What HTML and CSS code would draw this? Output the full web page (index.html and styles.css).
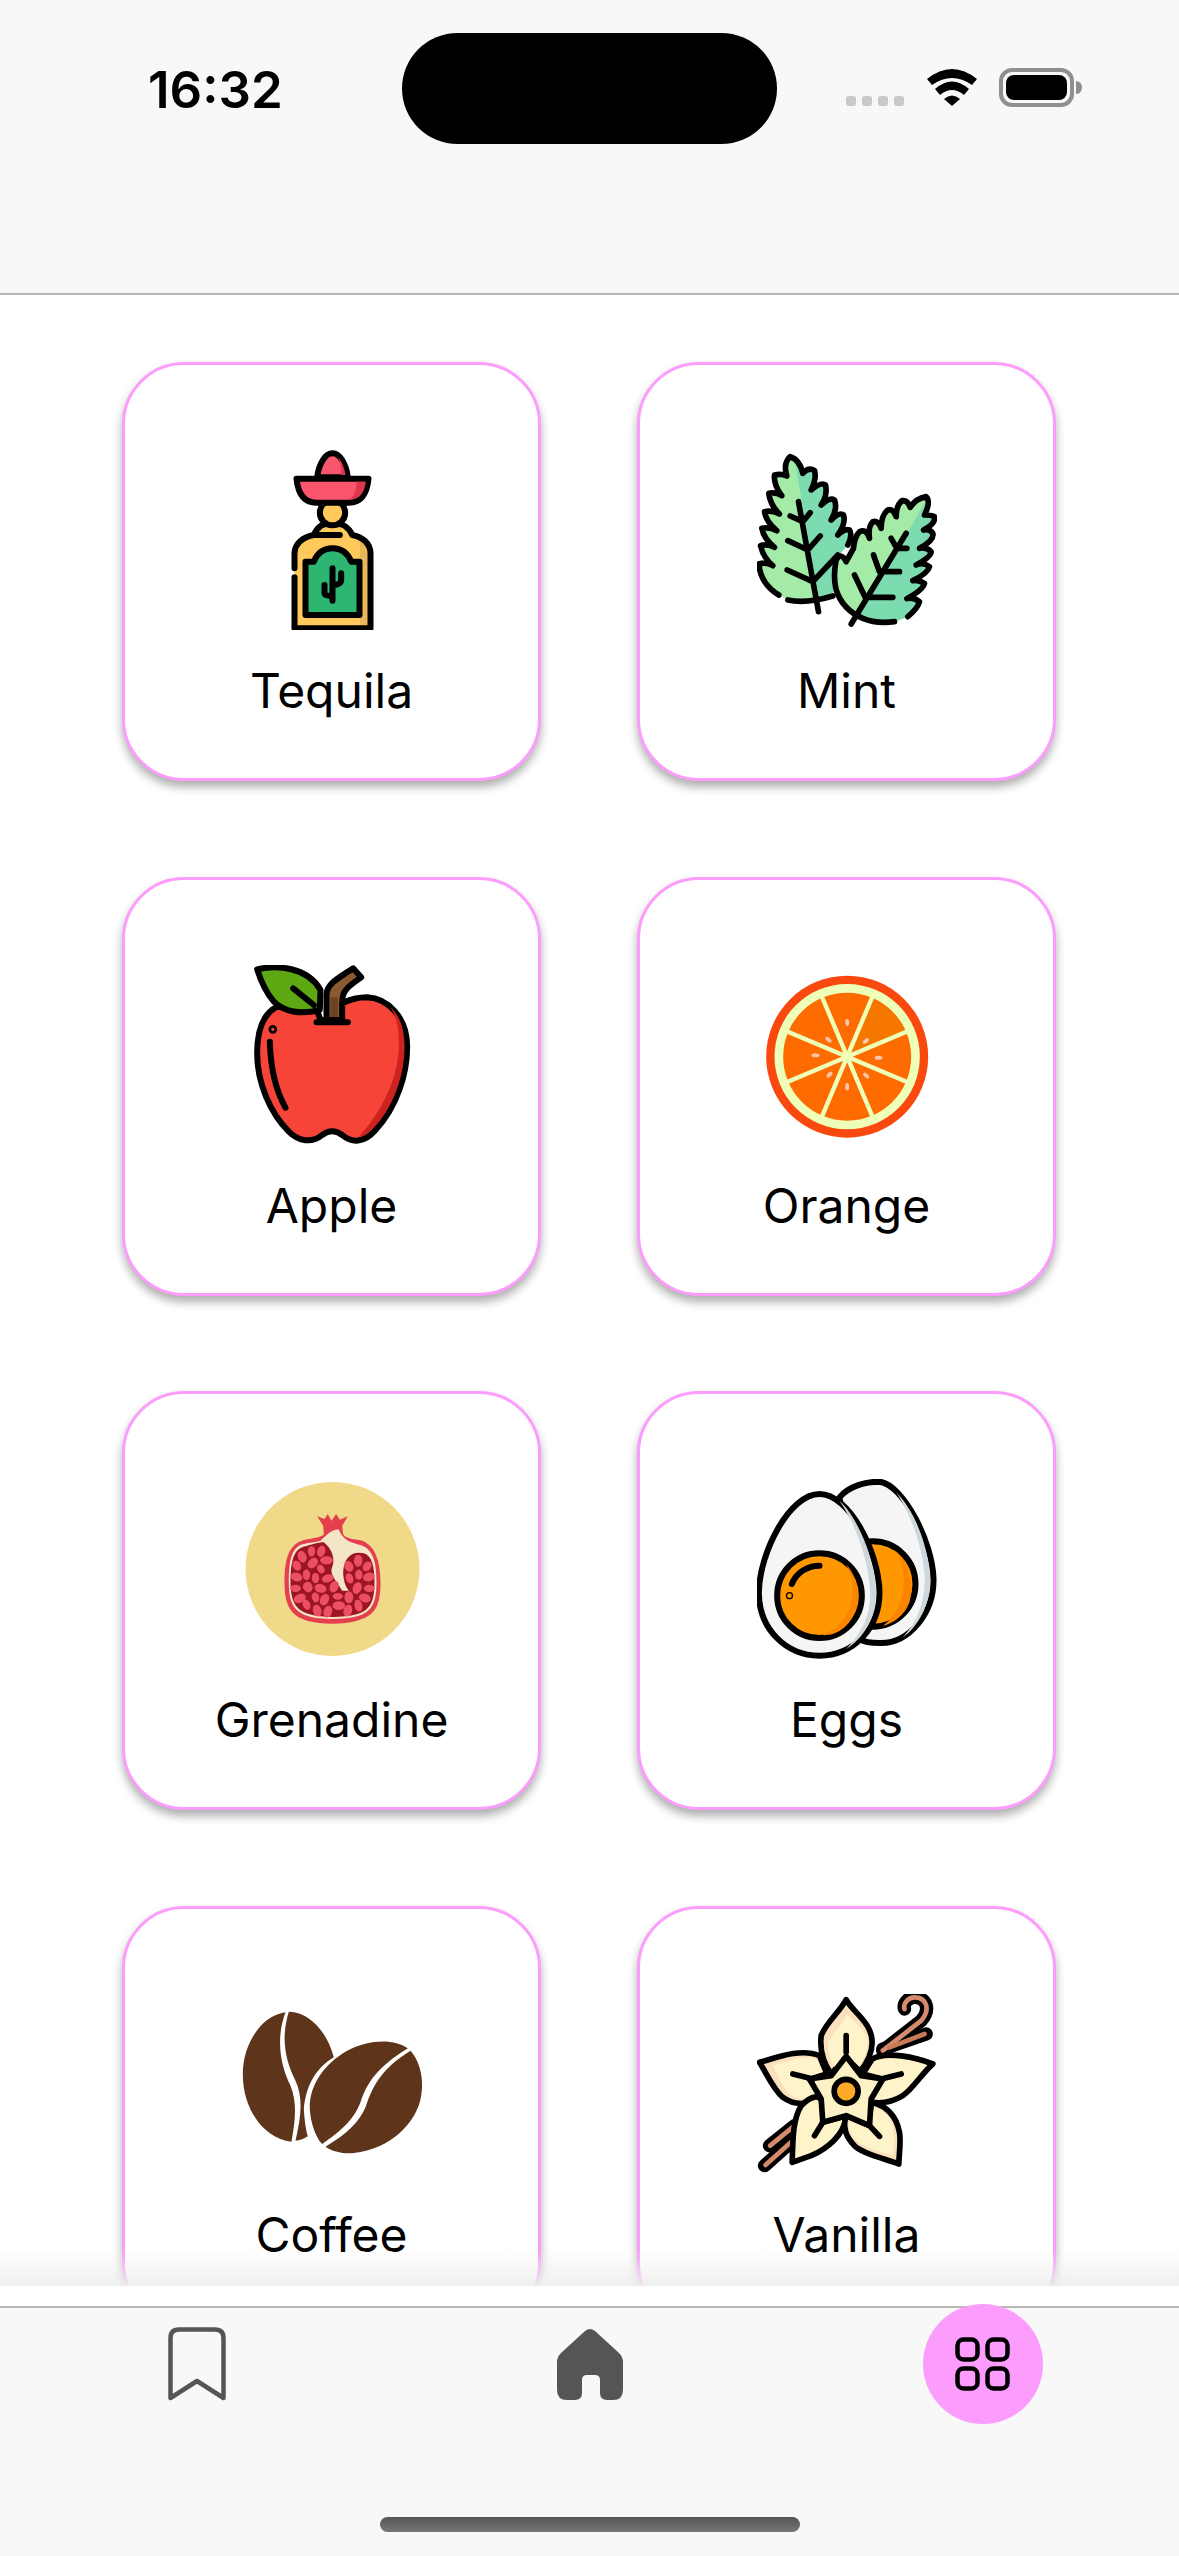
FILE: index.html
```html
<!DOCTYPE html>
<html lang="en">
<head>
<meta charset="utf-8">
<title>Ingredients</title>
<link rel="stylesheet" href="styles.css">
</head>
<body>
<div class="app">
  <header class="header">
    <div class="time">16:32</div>
    <div class="island"></div>
    <div class="status">
      <div class="signal"><span></span><span></span><span></span><span></span></div>
      <svg class="wifi" viewBox="0 0 50 37" width="50" height="37"><path d="M0 10Q25-10 50 10L45 16Q25 2 5 16Z"/><path d="M8 20Q25 5 42 20L37 26Q25 16 13 26Z"/><path d="M17 30Q25 23 33 30L25 37Z"/></svg>
      <div class="battery"><div class="battery-fill"></div></div>
      <div class="battery-tip"></div>
    </div>
  </header>

  <main class="main">
    <div class="grid">
      <article class="card">
        <svg class="icon" viewBox="424.5 330 540 540">
          <g class="ink" fill="none">
            <path d="M582 865V640C582 610 610 590 640 585C650 560 670 548 696 548C722 548 745 560 755 585C785 590 810 610 810 640V865Z" fill="#ffc95c" stroke="none"/>
            <path d="M778 600C800 610 810 625 810 640V865H778Z" fill="#e9b75a" stroke="none"/>
            <path d="M582 685V640C582 610 610 590 640 585C650 560 670 548 696 548C722 548 745 560 755 585C785 590 810 610 810 640V865H582V712"/>
            <path d="M640 585H718"/>
            <circle cx="696" cy="518" r="38" fill="#ffc95c"/>
            <path d="M650 412C655 370 675 340 696 340C717 340 737 370 742 412Z" fill="#f9566e"/>
            <path d="M712 350C725 365 732 385 735 405H722C722 385 720 365 712 350Z" fill="#e0354f" stroke="none"/>
            <path d="M588 416H804C800 455 785 488 745 488H647C607 488 592 455 588 416Z" fill="#f9566e"/>
            <path d="M768 425H796C792 455 780 478 745 480C762 468 768 450 768 425Z" fill="#e0354f" stroke="none"/>
            <path d="M777 775V665H752C742 640 722 625 696 625C670 625 650 640 640 665H615V825H777V800Z" fill="#2db672"/>
            <path d="M696 685V782M672 735V760C672 766 680 768 695 768M722 700V720C722 730 710 735 696 735"/>
          </g>
        </svg>
        <div class="label">Tequila</div>
      </article>

      <article class="card">
        <svg class="icon" viewBox="172.5 90 540 540">
          <defs>
            <clipPath id="mint-left"><polygon points="280,90 365,570 500,570 500,90"/></clipPath>
            <clipPath id="mint-right"><polygon points="690,225 458,620 730,620 730,225"/></clipPath>
          </defs>
          <g class="ink thin" fill="none">
            <path d="M238 525C205 505 182 475 178 432Q200 425 220 437Q192 415 183 377Q205 370 225 382Q192 355 187 325Q210 320 232 332Q200 305 195 275Q218 270 240 282Q212 255 208 220Q228 215 247 227Q222 195 225 165Q245 160 262 168Q250 130 272 110Q300 118 310 160Q328 140 345 152Q352 175 335 210Q365 185 378 195Q385 225 365 255Q390 230 405 240Q415 265 395 300Q420 275 432 285Q440 310 415 345Q435 325 450 330Q460 345 445 375L405 420L400 525Q340 550 265 540" fill="#a5eba8" stroke="none"/>
            <path d="M238 525C205 505 182 475 178 432Q200 425 220 437Q192 415 183 377Q205 370 225 382Q192 355 187 325Q210 320 232 332Q200 305 195 275Q218 270 240 282Q212 255 208 220Q228 215 247 227Q222 195 225 165Q245 160 262 168Q250 130 272 110Q300 118 310 160Q328 140 345 152Q352 175 335 210Q365 185 378 195Q385 225 365 255Q390 230 405 240Q415 265 395 300Q420 275 432 285Q440 310 415 345Q435 325 450 330Q460 345 445 375L405 420L400 525Q340 550 265 540" fill="#7ddbb0" stroke="none" clip-path="url(#mint-left)"/>
            <path d="M238 525C205 505 182 475 178 432Q200 425 220 437Q192 415 183 377Q205 370 225 382Q192 355 187 325Q210 320 232 332Q200 305 195 275Q218 270 240 282Q212 255 208 220Q228 215 247 227Q222 195 225 165Q245 160 262 168Q250 130 272 110Q300 118 310 160Q328 140 345 152Q352 175 335 210Q365 185 378 195Q385 225 365 255Q390 230 405 240Q415 265 395 300Q420 275 432 285Q440 310 415 345Q435 325 450 330Q460 345 445 375M265 540Q320 552 400 528"/>
            <path d="M297 245L357 575M272 288L310 305L332 278M265 362L325 390L362 348M263 450L340 485L415 405"/>
            <path d="M625 590Q655 565 660 545Q640 530 622 536Q670 510 675 490Q655 478 640 482Q685 460 690 440Q670 425 650 435Q695 410 695 395Q680 380 660 385Q705 360 700 340Q690 325 672 330Q710 310 705 290Q695 285 675 285Q695 245 680 230Q650 235 632 262Q625 240 608 242Q590 255 590 290Q580 265 565 270Q545 285 545 325Q535 300 520 305Q505 320 510 355Q500 325 480 335Q465 350 462 385L440 425Q425 395 410 420Q400 470 410 510Q430 570 490 595Q530 612 585 605Z" fill="#a5eba8" stroke="none"/>
            <path d="M625 590Q655 565 660 545Q640 530 622 536Q670 510 675 490Q655 478 640 482Q685 460 690 440Q670 425 650 435Q695 410 695 395Q680 380 660 385Q705 360 700 340Q690 325 672 330Q710 310 705 290Q695 285 675 285Q695 245 680 230Q650 235 632 262Q625 240 608 242Q590 255 590 290Q580 265 565 270Q545 285 545 325Q535 300 520 305Q505 320 510 355Q500 325 480 335Q465 350 462 385L440 425Q425 395 410 420Q400 470 410 510Q430 570 490 595Q530 612 585 605Z" fill="#7ddbb0" stroke="none" clip-path="url(#mint-right)"/>
            <path d="M625 590Q655 565 660 545Q640 530 622 536Q670 510 675 490Q655 478 640 482Q685 460 690 440Q670 425 650 435Q695 410 695 395Q680 380 660 385Q705 360 700 340Q690 325 672 330Q710 310 705 290Q695 285 675 285Q695 245 680 230Q650 235 632 262Q625 240 608 242Q590 255 590 290Q580 265 565 270Q545 285 545 325Q535 300 520 305Q505 320 510 355Q500 325 480 335Q465 350 462 385L440 425Q425 395 410 420Q400 470 410 510Q430 570 490 595Q530 612 585 605"/>
            <path d="M455 612L620 340M575 355L592 385H622M522 405L540 455H600M465 465L497 532H580"/>
          </g>
        </svg>
        <div class="label">Mint</div>
      </article>

      <article class="card">
        <svg class="icon" viewBox="64.5 75 540 540">
          <g class="ink" fill="none">
            <path d="M318 245V165C318 135 345 118 398 85L422 112C390 135 366 150 366 178V245Z" fill="#8b5a30"/>
            <path d="M330 172H352V238H330Z" fill="#6b4226" stroke="none"/>
            <path d="M170 200C130 220 110 270 110 340C110 430 150 520 205 575C235 605 275 610 305 585C325 570 345 570 365 585C395 610 430 610 465 570C530 500 560 400 560 320C560 230 500 175 440 172C410 172 385 180 365 190V240H300L290 212Z" fill="#f64438"/>
            <path d="M510 200C540 230 552 270 552 320C552 400 522 500 458 565C440 585 425 590 415 590C480 520 532 420 535 320C537 270 528 230 510 200Z" fill="#cd2320" stroke="none"/>
            <path d="M288 247H382"/>
            <path d="M110 88C170 75 260 80 300 150L298 210C240 225 190 215 160 185C135 155 120 120 110 88Z" fill="#5ea814"/>
            <path d="M218 145L280 195"/>
            <path d="M148 305C150 380 165 450 195 503"/>
            <circle cx="157" cy="268" r="4"/>
          </g>
        </svg>
        <div class="label">Apple</div>
      </article>

      <article class="card">
        <svg class="icon" viewBox="52.5 45 540 540">
          <circle cx="323" cy="320" r="243" fill="#f9490f"/>
          <circle cx="323" cy="320" r="218" fill="#eeffb8"/>
          <circle cx="323" cy="320" r="192" fill="#fe6b00"/>
          <path d="M323 320L400 150A192 192 0 0 1 500 245Z" fill="#f57700"/>
          <g class="rays">
            <path d="M323 320L245 135M323 320L401 135M323 320L138 242M323 320L508 242M323 320L138 398M323 320L508 398M323 320L245 505M323 320L401 505"/>
          </g>
          <circle cx="323" cy="320" r="16" fill="#eeffb8"/>
          <g fill="#fbc6a8">
            <ellipse cx="323" cy="217" rx="6" ry="11"/>
            <ellipse cx="267" cy="269" rx="6" ry="11" transform="rotate(-50 267 269)"/>
            <ellipse cx="379" cy="273" rx="6" ry="11" transform="rotate(50 379 273)"/>
            <ellipse cx="228" cy="316" rx="12" ry="6"/>
            <ellipse cx="417" cy="323" rx="12" ry="6"/>
            <ellipse cx="270" cy="374" rx="6" ry="11" transform="rotate(45 270 374)"/>
            <ellipse cx="380" cy="377" rx="6" ry="11" transform="rotate(-45 380 377)"/>
            <ellipse cx="323" cy="410" rx="6" ry="11"/>
          </g>
        </svg>
        <div class="label">Orange</div>
      </article>

      <article class="card">
        <svg class="icon" viewBox="64.5 60 540 540">
          <circle cx="336" cy="330" r="261" fill="#f0da89"/>
          <path d="M290 172L312 180L322 165L333 185L347 165L358 182L382 172L365 200L368 225C375 240 400 240 425 245C465 260 480 310 480 370C480 440 465 470 410 485C370 497 300 497 260 485C205 470 192 430 192 370C192 300 205 255 250 243C280 237 305 235 310 225L308 200Z" fill="#e53f4e"/>
          <path d="M250 255C215 262 205 300 205 370C205 430 220 460 265 472C300 483 370 483 410 472C455 460 468 430 468 370C468 315 460 270 420 258C395 250 370 248 355 212C340 208 320 225 300 245C285 250 265 250 250 255Z" fill="#f3e5c6"/>
          <path d="M255 262C222 268 210 300 210 370C210 425 225 455 268 466C305 477 368 477 408 466C450 455 462 425 462 370C462 325 455 290 430 283C400 275 370 290 368 340C368 360 375 385 385 395L365 395C350 370 325 345 335 325C345 300 335 270 310 250C290 250 270 258 255 262Z" fill="#9c1524"/>
          <g fill="#ec4f63">
            <ellipse cx="245" cy="293" rx="13" ry="18" transform="rotate(-20 245 293)"/>
            <ellipse cx="273" cy="277" rx="11" ry="16"/>
            <ellipse cx="302" cy="277" rx="12" ry="17" transform="rotate(15 302 277)"/>
            <ellipse cx="318" cy="304" rx="19" ry="12"/>
            <ellipse cx="277" cy="312" rx="13" ry="18" transform="rotate(45 277 312)"/>
            <ellipse cx="229" cy="320" rx="12" ry="16" transform="rotate(-30 229 320)"/>
            <ellipse cx="301" cy="330" rx="10" ry="14" transform="rotate(-30 301 330)"/>
            <ellipse cx="258" cy="347" rx="11" ry="16"/>
            <ellipse cx="285" cy="357" rx="11" ry="16"/>
            <ellipse cx="228" cy="354" rx="18" ry="13" transform="rotate(15 228 354)"/>
            <ellipse cx="322" cy="358" rx="18" ry="12" transform="rotate(-15 322 358)"/>
            <ellipse cx="341" cy="383" rx="13" ry="18" transform="rotate(25 341 383)"/>
            <ellipse cx="262" cy="384" rx="14" ry="16" transform="rotate(-30 262 384)"/>
            <ellipse cx="225" cy="388" rx="16" ry="11"/>
            <ellipse cx="300" cy="388" rx="18" ry="13" transform="rotate(15 300 388)"/>
            <ellipse cx="238" cy="418" rx="19" ry="13" transform="rotate(-25 238 418)"/>
            <ellipse cx="285" cy="415" rx="11" ry="15" transform="rotate(-15 285 415)"/>
            <ellipse cx="312" cy="422" rx="13" ry="18" transform="rotate(25 312 422)"/>
            <ellipse cx="258" cy="437" rx="11" ry="16" transform="rotate(-25 258 437)"/>
            <ellipse cx="290" cy="455" rx="13" ry="18" transform="rotate(-15 290 455)"/>
            <ellipse cx="322" cy="458" rx="13" ry="18" transform="rotate(15 322 458)"/>
            <ellipse cx="352" cy="412" rx="15" ry="10"/>
            <ellipse cx="385" cy="415" rx="13" ry="18"/>
            <ellipse cx="355" cy="440" rx="19" ry="13"/>
            <ellipse cx="382" cy="455" rx="13" ry="18" transform="rotate(15 382 455)"/>
            <ellipse cx="414" cy="440" rx="12" ry="18" transform="rotate(-15 414 440)"/>
            <ellipse cx="433" cy="417" rx="18" ry="13" transform="rotate(20 433 417)"/>
            <ellipse cx="410" cy="387" rx="13" ry="18" transform="rotate(25 410 387)"/>
            <ellipse cx="446" cy="388" rx="16" ry="11"/>
            <ellipse cx="445" cy="354" rx="18" ry="13" transform="rotate(-15 445 354)"/>
            <ellipse cx="415" cy="347" rx="11" ry="15"/>
            <ellipse cx="387" cy="358" rx="11" ry="16" transform="rotate(-20 387 358)"/>
            <ellipse cx="385" cy="322" rx="13" ry="17" transform="rotate(-25 385 322)"/>
            <ellipse cx="413" cy="305" rx="13" ry="18"/>
            <ellipse cx="440" cy="322" rx="12" ry="16" transform="rotate(35 440 322)"/>
          </g>
        </svg>
        <div class="label">Grenadine</div>
      </article>

      <article class="card">
        <svg class="icon" viewBox="52.5 30 540 540">
          <g class="ink" fill="none">
            <path d="M300 85C330 50 380 38 420 38C490 45 580 220 582 330C584 430 510 525 420 522C395 522 375 520 360 510Z" fill="#f5f5f5"/>
            <path d="M470 70C530 130 568 240 572 330C574 400 540 470 490 505C530 460 560 400 555 320C550 230 510 130 470 70Z" fill="#ced8dc" stroke="none"/>
            <circle cx="400" cy="345" r="128" fill="#ff9800"/>
            <path d="M470 245C510 290 525 345 510 400C495 440 460 465 430 470C490 430 515 320 470 245Z" fill="#fb8500" stroke="none"/>
            <path d="M240 75C150 75 60 250 58 370C58 480 140 560 240 560C340 560 420 480 420 370C418 250 330 75 240 75Z" fill="#f5f5f5"/>
            <path d="M300 95C350 140 405 260 410 370C410 450 370 510 320 540C370 490 395 430 392 370C388 270 345 160 300 95Z" fill="#ced8dc" stroke="none"/>
            <circle cx="240" cy="380" r="127" fill="#ff9800"/>
            <path d="M320 285C365 340 370 420 320 470C295 495 265 500 245 498C320 480 370 380 320 285Z" fill="#fb8500" stroke="none"/>
            <path d="M157 345C170 310 205 290 240 290"/>
            <circle cx="150" cy="380" r="2"/>
          </g>
        </svg>
        <div class="label">Eggs</div>
      </article>

      <article class="card">
        <svg class="icon" viewBox="34.5 45 540 540">
          <g fill="#5e351b">
            <path d="M165 100C90 110 35 200 37 290C38 390 100 480 183 488C195 420 200 370 180 320C150 260 135 180 165 100Z"/>
            <path d="M175 98C240 100 290 160 310 235C250 270 225 330 220 390C222 420 225 450 232 472C220 480 205 485 195 485C210 420 220 360 195 305C165 245 150 180 175 98Z"/>
            <path d="M532 208C490 180 420 180 350 215C280 255 235 320 238 390C240 430 255 475 275 495C340 450 370 420 390 370C410 310 440 265 532 208Z"/>
            <path d="M540 215C570 250 580 300 572 350C560 430 480 510 370 522C340 525 305 518 285 503C350 465 385 430 405 385C425 325 450 270 540 215Z"/>
          </g>
        </svg>
        <div class="label">Coffee</div>
      </article>

      <article class="card">
        <svg class="icon" viewBox="52.5 45 540 540">
          <g class="pod-ink" fill="none">
            <path d="M430 215L545 125C575 90 560 55 525 55C505 55 490 75 495 90"/>
            <path d="M430 210L560 165"/>
            <path d="M75 560L165 480M90 500L165 440"/>
          </g>
          <g class="pod" fill="none">
            <path d="M430 215L545 125C575 90 560 55 525 55C505 55 490 75 495 90"/>
            <path d="M450 205L555 165" class="pod-dark"/>
            <path d="M78 558L165 480M92 500L165 440"/>
          </g>
          <g class="ink thin" fill="none">
            <path d="M320 62C340 100 398 130 398 190C398 225 380 255 362 278L320 232L275 285C250 250 240 215 245 170C260 130 300 100 320 62Z" fill="#fbe0bd"/>
            <path d="M322 105C350 135 385 155 385 190C385 220 372 245 358 262L320 225L285 265C270 240 265 215 268 185C285 160 310 135 322 105Z" fill="#fef3c9" stroke="none"/>
            <path d="M398 240C440 215 530 235 580 255C550 280 520 330 490 350C450 375 410 375 375 365L428 300L370 285Z" fill="#fef3c9"/>
            <path d="M60 250C100 240 180 205 240 230L262 285L210 300L245 350C220 375 170 385 130 355C100 330 80 280 60 250Z" fill="#fbe0bd"/>
            <path d="M100 260C140 250 190 225 232 240L250 278L195 298L230 345C205 362 175 365 150 345C130 325 115 290 100 260Z" fill="#fef3c9" stroke="none"/>
            <path d="M158 550C160 480 160 420 185 380C215 350 240 345 250 370L250 430L320 410C315 470 260 510 215 530Z" fill="#fef3c9"/>
            <path d="M320 410L390 440L395 370C440 380 470 410 480 460C485 490 478 530 478 555C440 540 370 525 345 500C315 470 310 440 320 410Z" fill="#fbe0bd"/>
            <path d="M328 425L385 450L405 385C440 395 458 420 462 460C465 485 462 510 460 530C430 520 380 510 358 490C335 470 325 450 328 425Z" fill="#fef3c9" stroke="none"/>
            <path d="M320 232L365 290L430 300L395 360L390 440L320 410L250 430L245 360L210 300L275 290Z" fill="#fdf1c6"/>
            <path d="M320 170V220M160 285L220 300M485 285L425 300M225 470L250 430M420 472L390 440"/>
            <circle cx="320" cy="337" r="36" fill="#fcaa28"/>
          </g>
        </svg>
        <div class="label">Vanilla</div>
      </article>
    </div>
    <div class="scrim"></div>
  </main>

  <div class="strip"></div>

  <nav class="tabbar">
    <div class="tabs">
      <div class="tab">
        <svg class="tab-bookmark" viewBox="0 0 58 74" width="58" height="74"><path d="M2.5 71V11Q2.5 2.5 11 2.5H47Q55.5 2.5 55.5 11V71L29 54Z"/></svg>
      </div>
      <div class="tab">
        <svg class="tab-home" viewBox="0 0 66 72" width="66" height="72"><path d="M28 3Q33-1 38 3L62 25Q66 29 66 34V62Q66 72 56 72H50Q43 72 43 65V52Q43 47 38 47H30Q25 47 25 52V65Q25 72 18 72H10Q0 72 0 62V34Q0 29 4 25Z"/></svg>
      </div>
      <div class="tab">
        <div class="tab-active">
          <svg class="tab-grid" viewBox="0 0 55 54" width="55" height="54">
            <rect x="2.5" y="2.5" width="20" height="20" rx="6"/>
            <rect x="32.5" y="2.5" width="20" height="20" rx="6"/>
            <rect x="2.5" y="31.5" width="20" height="20" rx="6"/>
            <rect x="32.5" y="31.5" width="20" height="20" rx="6"/>
          </svg>
        </div>
      </div>
    </div>
    <div class="home-indicator"></div>
  </nav>
</div>
</body>
</html>
```

FILE: styles.css
```css
* { box-sizing: border-box; }

html, body {
  margin: 0;
  padding: 0;
  background: #fff;
}

.app {
  width: 1179px;
  height: 2556px;
  display: flex;
  flex-direction: column;
  overflow: hidden;
  font-family: Inter, "Liberation Sans", sans-serif;
  color: #000;
}

/* Header and status bar */
.header {
  flex: none;
  height: 295px;
  background: #f8f8f8;
  border-bottom: 2px solid #b8b8b8;
  display: flex;
  align-items: flex-start;
  padding: 33px 0 0 148px;
}

.time {
  width: 254px;
  margin-top: 27px;
  font-size: 51px;
  line-height: 60px;
  font-weight: 600;
}

.island {
  width: 375px;
  height: 111px;
  border-radius: 56px;
  background: #000;
}

.status {
  margin: 35px 0 0 69px;
  height: 39px;
  display: flex;
  align-items: flex-end;
}

.signal {
  display: flex;
  gap: 6px;
  margin-right: 23px;
  margin-bottom: 1px;
}

.signal span {
  width: 10px;
  height: 10px;
  border-radius: 3px;
  background: #c8c8c8;
}

.wifi {
  fill: #000;
  margin-right: 22px;
  margin-bottom: 1px;
}

.battery {
  width: 75px;
  height: 39px;
  border: 4px solid #8f8f8f;
  border-radius: 13px;
  padding: 3px;
  background: #f8f8f8;
}

.battery-fill {
  width: 100%;
  height: 100%;
  border-radius: 8px;
  background: #000;
}

.battery-tip {
  width: 6px;
  height: 13px;
  margin: 0 0 13px 2px;
  border-radius: 0 7px 7px 0;
  background: #8f8f8f;
}

/* Card grid */
.main {
  flex: 1;
  min-height: 0;
  position: relative;
  overflow: hidden;
  background: #fff;
}

.grid {
  display: grid;
  grid-template-columns: repeat(2, 419px);
  column-gap: 96px;
  row-gap: 95.5px;
  padding: 67px 0 0 122px;
}

.card {
  height: 419px;
  background: #fff;
  border: 3px solid #fc9cfc;
  border-radius: 62px;
  box-shadow: 0 6px 10px rgba(0, 0, 0, 0.32);
  display: flex;
  flex-direction: column;
  align-items: center;
  padding-top: 85px;
}

.icon {
  width: 180px;
  height: 180px;
  flex: none;
  display: block;
}

.label {
  margin-top: 31px;
  font-size: 48px;
  line-height: 60px;
  font-weight: 400;
  white-space: nowrap;
}

.ink {
  stroke: #000;
  stroke-width: 18;
  stroke-linecap: round;
  stroke-linejoin: round;
}

.ink.thin {
  stroke-width: 17;
}

.rays {
  stroke: #eeffb8;
  stroke-width: 13;
}

.pod-ink {
  stroke: #000;
  stroke-width: 40;
  stroke-linecap: round;
  stroke-linejoin: round;
}

.pod {
  stroke: #d68b6c;
  stroke-width: 14;
  stroke-linecap: round;
  stroke-linejoin: round;
}

.pod-dark {
  stroke: #c97a57;
}

.scrim {
  position: absolute;
  left: 0;
  right: 0;
  bottom: 0;
  height: 36px;
  background: linear-gradient(to bottom, rgba(238, 238, 238, 0), rgba(238, 238, 238, 1));
  opacity: 0.9;
}

.strip {
  flex: none;
  height: 20px;
  background: #fff;
}

/* Tab bar */
.tabbar {
  flex: none;
  height: 250px;
  background: #f8f8f8;
  border-top: 2px solid #b8b8b8;
  display: flex;
  flex-direction: column;
  align-items: center;
}

.tabs {
  width: 100%;
  height: 120px;
  margin-top: -4px;
  display: grid;
  grid-template-columns: repeat(3, 1fr);
  align-items: center;
  justify-items: center;
}

.tab {
  display: flex;
  align-items: center;
  justify-content: center;
}

.tab-bookmark {
  fill: none;
  stroke: #555;
  stroke-width: 4.5;
  stroke-linejoin: round;
}

.tab-home {
  fill: #555;
}

.tab-active {
  width: 120px;
  height: 120px;
  border-radius: 50%;
  background: #fc9cfc;
  display: flex;
  align-items: center;
  justify-content: center;
}

.tab-grid {
  fill: none;
  stroke: #000;
  stroke-width: 4.5;
}

.home-indicator {
  width: 420px;
  height: 15px;
  margin-top: 93px;
  border-radius: 8px;
  background: linear-gradient(to bottom, #555, #777);
}
```
